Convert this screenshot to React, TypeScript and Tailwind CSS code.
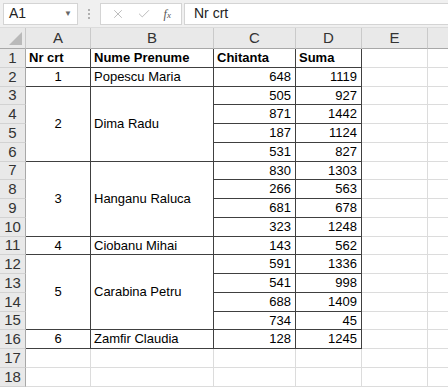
import React from "react";
import { X, Check } from "lucide-react";

type Row = {
  n: number;
  a?: string;
  b?: string;
  span?: number;
  c?: string;
  d?: string;
  bold?: boolean;
  skipAB?: boolean;
  empty?: boolean;
};

const rows: Row[] = [
  { n: 1, a: "Nr crt", b: "Nume Prenume", c: "Chitanta", d: "Suma", bold: true },
  { n: 2, a: "1", b: "Popescu Maria", c: "648", d: "1119" },
  { n: 3, a: "2", b: "Dima Radu", span: 4, c: "505", d: "927" },
  { n: 4, skipAB: true, c: "871", d: "1442" },
  { n: 5, skipAB: true, c: "187", d: "1124" },
  { n: 6, skipAB: true, c: "531", d: "827" },
  { n: 7, a: "3", b: "Hanganu Raluca", span: 4, c: "830", d: "1303" },
  { n: 8, skipAB: true, c: "266", d: "563" },
  { n: 9, skipAB: true, c: "681", d: "678" },
  { n: 10, skipAB: true, c: "323", d: "1248" },
  { n: 11, a: "4", b: "Ciobanu Mihai", c: "143", d: "562" },
  { n: 12, a: "5", b: "Carabina Petru", span: 4, c: "591", d: "1336" },
  { n: 13, skipAB: true, c: "541", d: "998" },
  { n: 14, skipAB: true, c: "688", d: "1409" },
  { n: 15, skipAB: true, c: "734", d: "45" },
  { n: 16, a: "6", b: "Zamfir Claudia", c: "128", d: "1245" },
  { n: 17, empty: true },
  { n: 18, empty: true },
];

const cols = ["A", "B", "C", "D", "E"];

function RowHeader({ n }: { n: number }) {
  return (
    <div className="flex items-center justify-center bg-[#e9e9e9] border-r border-b border-r-[#a8a8a8] border-b-[#d2d2d2] text-[15px] text-[#333]">
      {n}
    </div>
  );
}

export default function App() {
  return (
    <div
      className="w-[448px] h-[387px] overflow-hidden bg-white text-[13px] text-black"
      style={{ fontFamily: '"Liberation Sans", Arial, sans-serif' }}
    >
      {/* formula bar */}
      <div className="h-[28px] bg-[#f0f0f0] flex items-center pl-[3px] border-b border-[#dcdcdc]">
        <div className="w-[75px] h-[22px] bg-white border border-[#d4d4d4] flex items-center justify-between pl-[5px] pr-[5px] text-[14px] text-[#222]">
          <span>A1</span>
          <span className="text-[8px] text-[#666]">▼</span>
        </div>
        <div className="w-[22px] flex flex-col items-center gap-[2px]">
          <span className="w-[2px] h-[2px] bg-[#b0b0b0]" />
          <span className="w-[2px] h-[2px] bg-[#b0b0b0]" />
          <span className="w-[2px] h-[2px] bg-[#b0b0b0]" />
        </div>
        <div className="w-[82px] h-[22px] bg-white border border-[#d4d4d4] flex items-center justify-around px-[4px]">
          <X size={14} strokeWidth={1.3} color="#a8a8a8" />
          <Check size={14} strokeWidth={1.3} color="#a8a8a8" />
          <span
            className="italic text-[12px] text-[#555]"
            style={{ fontFamily: '"Liberation Serif", serif' }}
          >
            f<span className="text-[9px]">x</span>
          </span>
        </div>
        <div className="flex-1 h-[22px] ml-[2px] bg-white border border-[#d4d4d4] border-r-0 flex items-center pl-[9px] text-[14px] text-[#222]">
          Nr crt
        </div>
      </div>

      {/* sheet grid */}
      <div className="grid grid-cols-[26px_65px_123px_82px_66px_66px_1fr] grid-rows-[21px_19px_19px_18px_19px_19px_19px_18px_19px_19px_19px_18px_19px_19px_19px_18px_19px_19px_19px]">
        {/* select-all corner */}
        <div className="relative bg-[#e9e9e9] border-r border-b border-r-[#c8c8c8] border-b-[#a8a8a8]">
          <svg className="absolute right-[3px] bottom-[3px]" width="13" height="13" viewBox="0 0 13 13">
            <polygon points="13,0 13,13 0,13" fill="#b9b9b9" />
          </svg>
        </div>
        {cols.map((c) => (
          <div
            key={c}
            className="flex items-center justify-center bg-[#e9e9e9] border-r border-b border-r-[#cacaca] border-b-[#a8a8a8] text-[15px] text-[#333]"
          >
            {c}
          </div>
        ))}
        <div className="bg-[#e9e9e9] border-b border-b-[#a8a8a8]" />

        {rows.map((r) => {
          const edge = r.empty ? "border-[#dcdcdc]" : "border-[#404040]";
          return (
            <React.Fragment key={r.n}>
              <RowHeader n={r.n} />
              {!r.skipAB && (
                <>
                  <div
                    className={`flex items-center border-r border-b ${edge} ${r.bold ? "justify-start pl-[3px] font-bold" : "justify-center"} ${r.span === 4 ? "row-span-4" : ""}`}
                  >
                    {r.a}
                  </div>
                  <div
                    className={`flex items-center pl-[3px] border-r border-b ${edge} ${r.bold ? "font-bold" : ""} ${r.span === 4 ? "row-span-4" : ""}`}
                  >
                    {r.b}
                  </div>
                </>
              )}
              <div
                className={`flex items-center border-r border-b ${edge} ${r.bold ? "justify-start pl-[3px] font-bold" : "justify-end pr-[4px]"}`}
              >
                {r.c}
              </div>
              <div
                className={`flex items-center border-r border-b ${edge} ${r.bold ? "justify-start pl-[3px] font-bold" : "justify-end pr-[4px]"}`}
              >
                {r.d}
              </div>
              <div className="border-r border-b border-[#dcdcdc]" />
              <div className="border-b border-[#dcdcdc]" />
            </React.Fragment>
          );
        })}
      </div>
    </div>
  );
}
